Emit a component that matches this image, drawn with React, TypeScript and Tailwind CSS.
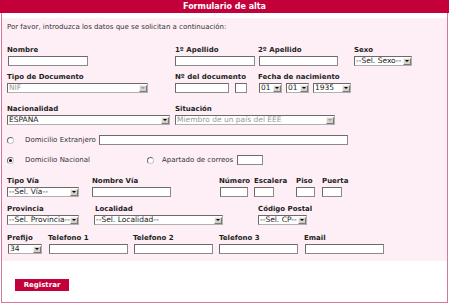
import React from "react";

function Label({ children, cls = "" }: { children: React.ReactNode; cls?: string }) {
  return (
    <div className={`h-[9px] whitespace-nowrap text-[7px] leading-[9px] font-bold text-[#1e1e1e] ${cls}`}>
      {children}
    </div>
  );
}

function Inp({ cls }: { cls: string }) {
  return (
    <div
      className={`h-[10px] shrink-0 bg-white border border-t-[#6a6a6a] border-l-[#6a6a6a] border-b-[#8a8a8a] border-r-[#8a8a8a] ${cls}`}
    />
  );
}

function Sel({ cls, text, disabled }: { cls: string; text: string; disabled?: boolean }) {
  return (
    <div
      className={`h-[10px] shrink-0 flex items-stretch bg-white border border-t-[#6a6a6a] border-l-[#6a6a6a] border-b-[#b0b0b0] border-r-[#b0b0b0] ${cls}`}
    >
      <div
        className={`flex-1 overflow-hidden whitespace-nowrap pl-[1px] text-[7.5px] leading-[8px] ${
          disabled ? "text-[#9a9a9a]" : "text-[#222]"
        }`}
      >
        {text}
      </div>
      <div className="w-[8px] my-[0.5px] mr-[0.5px] flex items-center justify-center bg-[#d4d0c8] border border-t-[#f4f4f4] border-l-[#f4f4f4] border-b-[#7a7a7a] border-r-[#7a7a7a]">
        <div
          className={`w-0 h-0 border-l-[2px] border-r-[2px] border-t-[2px] border-l-transparent border-r-transparent ${
            disabled ? "border-t-[#9a9a9a]" : "border-t-black"
          }`}
        />
      </div>
    </div>
  );
}

function Radio({ checked }: { checked?: boolean }) {
  return (
    <div className="w-[7px] h-[7px] shrink-0 rounded-full bg-white border border-t-[#6a6a6a] border-l-[#6a6a6a] border-b-[#c8c8c8] border-r-[#c8c8c8] flex items-center justify-center">
      {checked && <div className="w-[3px] h-[3px] rounded-full bg-black" />}
    </div>
  );
}

export default function App() {
  return (
    <div className="w-[450px] h-[305px] bg-white font-['DejaVu_Sans',sans-serif] overflow-hidden">
      <div className="w-[449px] h-[13px] bg-[#c4003a] flex items-center justify-center text-white font-bold text-[8px] leading-[13px]">
        Formulario de alta
      </div>
      <div className="ml-[1px] w-[447px] h-[290px] border-l border-r border-b border-[#d6769f] pt-[5px]">
        <div className="bg-[#fdeff5] pl-[5px] pt-[5px] pb-[7px]">
          <div className="h-[9px] text-[7px] leading-[9px] text-[#333]">
            Por favor, introduzca los datos que se solicitan a continuación:
          </div>

          {/* Row 1 */}
          <div className="flex mt-[14px]">
            <div className="w-[168px] flex flex-col gap-[1px]">
              <Label>Nombre</Label>
              <Inp cls="w-[80px] ml-[1px]" />
            </div>
            <div className="w-[83px] flex flex-col gap-[1px]">
              <Label>1º Apellido</Label>
              <Inp cls="w-[80px]" />
            </div>
            <div className="w-[96px] flex flex-col gap-[1px]">
              <Label>2º Apellido</Label>
              <Inp cls="w-[79px] ml-[1px]" />
            </div>
            <div className="flex flex-col gap-[1px]">
              <Label>Sexo</Label>
              <Sel cls="w-[58px]" text="--Sel. Sexo--" />
            </div>
          </div>

          {/* Row 2 */}
          <div className="flex mt-[7px]">
            <div className="w-[168px] flex flex-col gap-[1px]">
              <Label>Tipo de Documento</Label>
              <Sel cls="w-[141px]" text="NIF" disabled />
            </div>
            <div className="w-[83px] flex flex-col gap-[1px]">
              <Label>Nº del documento</Label>
              <div className="flex gap-[6px]">
                <Inp cls="w-[54px]" />
                <Inp cls="w-[12px]" />
              </div>
            </div>
            <div className="flex flex-col gap-[1px]">
              <Label>Fecha de nacimiento</Label>
              <div className="flex gap-[4px] ml-[1px]">
                <Sel cls="w-[23px]" text="01" />
                <Sel cls="w-[23px]" text="01" />
                <Sel cls="w-[38px]" text="1935" />
              </div>
            </div>
          </div>

          {/* Row 3 */}
          <div className="flex mt-[12px]">
            <div className="w-[168px] flex flex-col gap-[1px]">
              <Label>Nacionalidad</Label>
              <Sel cls="w-[163px]" text="ESPAÑA" />
            </div>
            <div className="flex flex-col gap-[1px]">
              <Label>Situación</Label>
              <Sel cls="w-[160px]" text="Miembro de un país del EEE" disabled />
            </div>
          </div>

          {/* Radio row 1 */}
          <div className="flex items-center h-[10px] mt-[10px]">
            <Radio />
            <div className="ml-[11px] w-[74px] text-[7px] leading-[9px] text-[#333] whitespace-nowrap">
              Domicilio Extranjero
            </div>
            <Inp cls="w-[249px]" />
          </div>

          {/* Radio row 2 */}
          <div className="flex items-center h-[10px] mt-[10px]">
            <Radio checked />
            <div className="ml-[11px] w-[122px] text-[7px] leading-[9px] text-[#333] whitespace-nowrap">
              Domicilio Nacional
            </div>
            <Radio />
            <div className="ml-[8px] w-[75px] text-[7px] leading-[9px] text-[#333] whitespace-nowrap">
              Apartado de correos
            </div>
            <Inp cls="w-[26px]" />
          </div>

          {/* Row 6 */}
          <div className="flex mt-[12px]">
            <div className="w-[85px] flex flex-col gap-[1px]">
              <Label>Tipo Vía</Label>
              <Sel cls="w-[72px]" text="--Sel. Vía--" />
            </div>
            <div className="w-[127px] flex flex-col gap-[1px]">
              <Label>Nombre Vía</Label>
              <Inp cls="w-[79px]" />
            </div>
            <div className="w-[35px] flex flex-col gap-[1px]">
              <Label>Número</Label>
              <Inp cls="w-[28px] ml-[1px]" />
            </div>
            <div className="w-[42px] flex flex-col gap-[1px]">
              <Label>Escalera</Label>
              <Inp cls="w-[20px]" />
            </div>
            <div className="w-[26px] flex flex-col gap-[1px]">
              <Label>Piso</Label>
              <Inp cls="w-[19px]" />
            </div>
            <div className="flex flex-col gap-[1px]">
              <Label>Puerta</Label>
              <Inp cls="w-[20px]" />
            </div>
          </div>

          {/* Row 7 */}
          <div className="flex mt-[8px]">
            <div className="w-[87px] flex flex-col gap-[1px]">
              <Label>Provincia</Label>
              <Sel cls="w-[72px]" text="--Sel. Provincia--" />
            </div>
            <div className="w-[164px] flex flex-col gap-[1px]">
              <Label cls="ml-[1px]">Localidad</Label>
              <Sel cls="w-[129px]" text="--Sel. Localidad--" />
            </div>
            <div className="flex flex-col gap-[1px]">
              <Label>Código Postal</Label>
              <Sel cls="w-[49px]" text="--Sel. CP--" />
            </div>
          </div>

          {/* Row 8 */}
          <div className="flex mt-[9px]">
            <div className="w-[41px] flex flex-col gap-[1px]">
              <Label>Prefijo</Label>
              <Sel cls="w-[34px] ml-[1px]" text="34" />
            </div>
            <div className="w-[85px] flex flex-col gap-[1px]">
              <Label>Telefono 1</Label>
              <Inp cls="w-[79px] ml-[1px]" />
            </div>
            <div className="w-[86px] flex flex-col gap-[1px]">
              <Label>Telefono 2</Label>
              <Inp cls="w-[79px] ml-[1px]" />
            </div>
            <div className="w-[85px] flex flex-col gap-[1px]">
              <Label>Telefono 3</Label>
              <Inp cls="w-[79px]" />
            </div>
            <div className="flex flex-col gap-[1px]">
              <Label>Email</Label>
              <Inp cls="w-[79px] ml-[1px]" />
            </div>
          </div>
        </div>

        <div className="pl-[13px] pt-[18px]">
          <div className="w-[54px] h-[12px] bg-[#c4003a] flex items-center justify-center text-white font-bold text-[7px] leading-[12px]">
            Registrar
          </div>
        </div>
      </div>
    </div>
  );
}
